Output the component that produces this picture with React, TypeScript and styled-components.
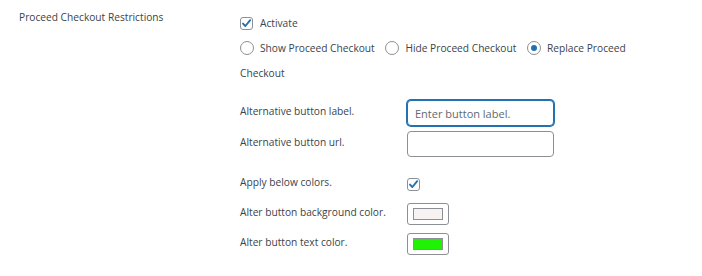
import React from 'react';
import styled, { createGlobalStyle } from 'styled-components';

const GlobalStyle = createGlobalStyle`
  body {
    margin: 0;
    background: #ffffff;
    font-family: 'Open Sans', 'Liberation Sans', sans-serif;
    font-size: 10.2px;
    color: #3c434a;
  }
`;

const Section = styled.section`
  display: grid;
  grid-template-columns: 240px 1fr;
  padding-top: 10px;
`;

const Heading = styled.div`
  padding-left: 19px;
  line-height: 14px;
`;

const Field = styled.div`
  display: flex;
  flex-direction: column;
`;

const CheckRow = styled.label`
  display: flex;
  align-items: center;
  gap: 7px;
  height: 14px;
  margin-top: 6px;
`;

const Box = styled.span`
  box-sizing: border-box;
  width: 13px;
  height: 13px;
  border: 1px solid #8c8f94;
  border-radius: 3px;
  display: inline-flex;
  align-items: center;
  justify-content: center;
  flex-shrink: 0;
`;

const RadioGroup = styled.div`
  margin-top: 6px;
  width: 392px;
  line-height: 25px;
`;

const RadioOption = styled.label`
  display: inline;
  margin-right: 8px;
`;

const RadioCircle = styled.span<{ $checked?: boolean }>`
  box-sizing: border-box;
  display: inline-block;
  vertical-align: -3px;
  width: 14px;
  height: 14px;
  border: 1px solid #8c8f94;
  border-radius: 50%;
  margin-right: 6px;
  position: relative;
  &::after {
    content: '';
    display: ${p => (p.$checked ? 'block' : 'none')};
    position: absolute;
    left: 3px;
    top: 3px;
    width: 6px;
    height: 6px;
    border-radius: 50%;
    background: #2271b1;
  }
`;

const SubTable = styled.div`
  display: grid;
  grid-template-columns: 167px 147px;
  align-items: center;
`;

const SubLabel = styled.div<{ $gap?: number }>`
  margin-top: ${p => p.$gap ?? 0}px;
  line-height: 14px;
  position: relative;
  top: -2px;
`;

const Cell = styled.div<{ $gap?: number }>`
  margin-top: ${p => p.$gap ?? 0}px;
  display: flex;
`;

const TextInput = styled.input<{ $focus?: boolean }>`
  box-sizing: border-box;
  width: 147px;
  height: 26px;
  border: 1px solid ${p => (p.$focus ? '#2271b1' : '#8c8f94')};
  box-shadow: ${p => (p.$focus ? '0 0 0 1px #2271b1' : 'none')};
  border-radius: 4px;
  padding: 0 7px;
  font-family: inherit;
  font-size: 11px;
  color: #2c3338;
  outline: none;
  &::placeholder {
    color: #646970;
  }
`;

const Swatch = styled.span`
  box-sizing: border-box;
  width: 42px;
  height: 22px;
  border: 1px solid #8c8f94;
  border-radius: 3px;
  padding: 4px 5px;
  display: inline-flex;
`;

const SwatchFill = styled.span<{ $color: string }>`
  flex: 1;
  background: ${p => p.$color};
  border: 1px solid #8c8f94;
`;

const Check = () => (
  <Box>
    <svg width="11" height="11" viewBox="0 0 11 11">
      <path d="M2 5.6 L4.4 8 L9.2 2.2" fill="none" stroke="#2271b1" strokeWidth="1.9" strokeLinecap="round" strokeLinejoin="round" />
    </svg>
  </Box>
);

const App = () => (
  <>
    <GlobalStyle />
    <Section>
      <Heading>Proceed Checkout Restrictions</Heading>
      <Field>
        <CheckRow>
          <Check />
          Activate
        </CheckRow>
        <RadioGroup>
          <RadioOption><RadioCircle />Show Proceed Checkout</RadioOption>{' '}
          <RadioOption><RadioCircle />Hide Proceed Checkout</RadioOption>{' '}
          <RadioOption>
            <RadioCircle $checked />
            <span>Replace Proceed</span> <span>Checkout</span>
          </RadioOption>
        </RadioGroup>
        <SubTable>
          <SubLabel $gap={14}>Alternative button label.</SubLabel>
          <Cell $gap={14}><TextInput $focus placeholder="Enter button label." /></Cell>
          <SubLabel $gap={5}>Alternative button url.</SubLabel>
          <Cell $gap={5}><TextInput /></Cell>
          <SubLabel $gap={20}>Apply below colors.</SubLabel>
          <Cell $gap={20}><Check /></Cell>
          <SubLabel $gap={12}>Alter button background color.</SubLabel>
          <Cell $gap={12}><Swatch><SwatchFill $color="#f6f3f2" /></Swatch></Cell>
          <SubLabel $gap={8}>Alter button text color.</SubLabel>
          <Cell $gap={8}><Swatch><SwatchFill $color="#1ff205" /></Swatch></Cell>
        </SubTable>
      </Field>
    </Section>
  </>
);

export default App;
